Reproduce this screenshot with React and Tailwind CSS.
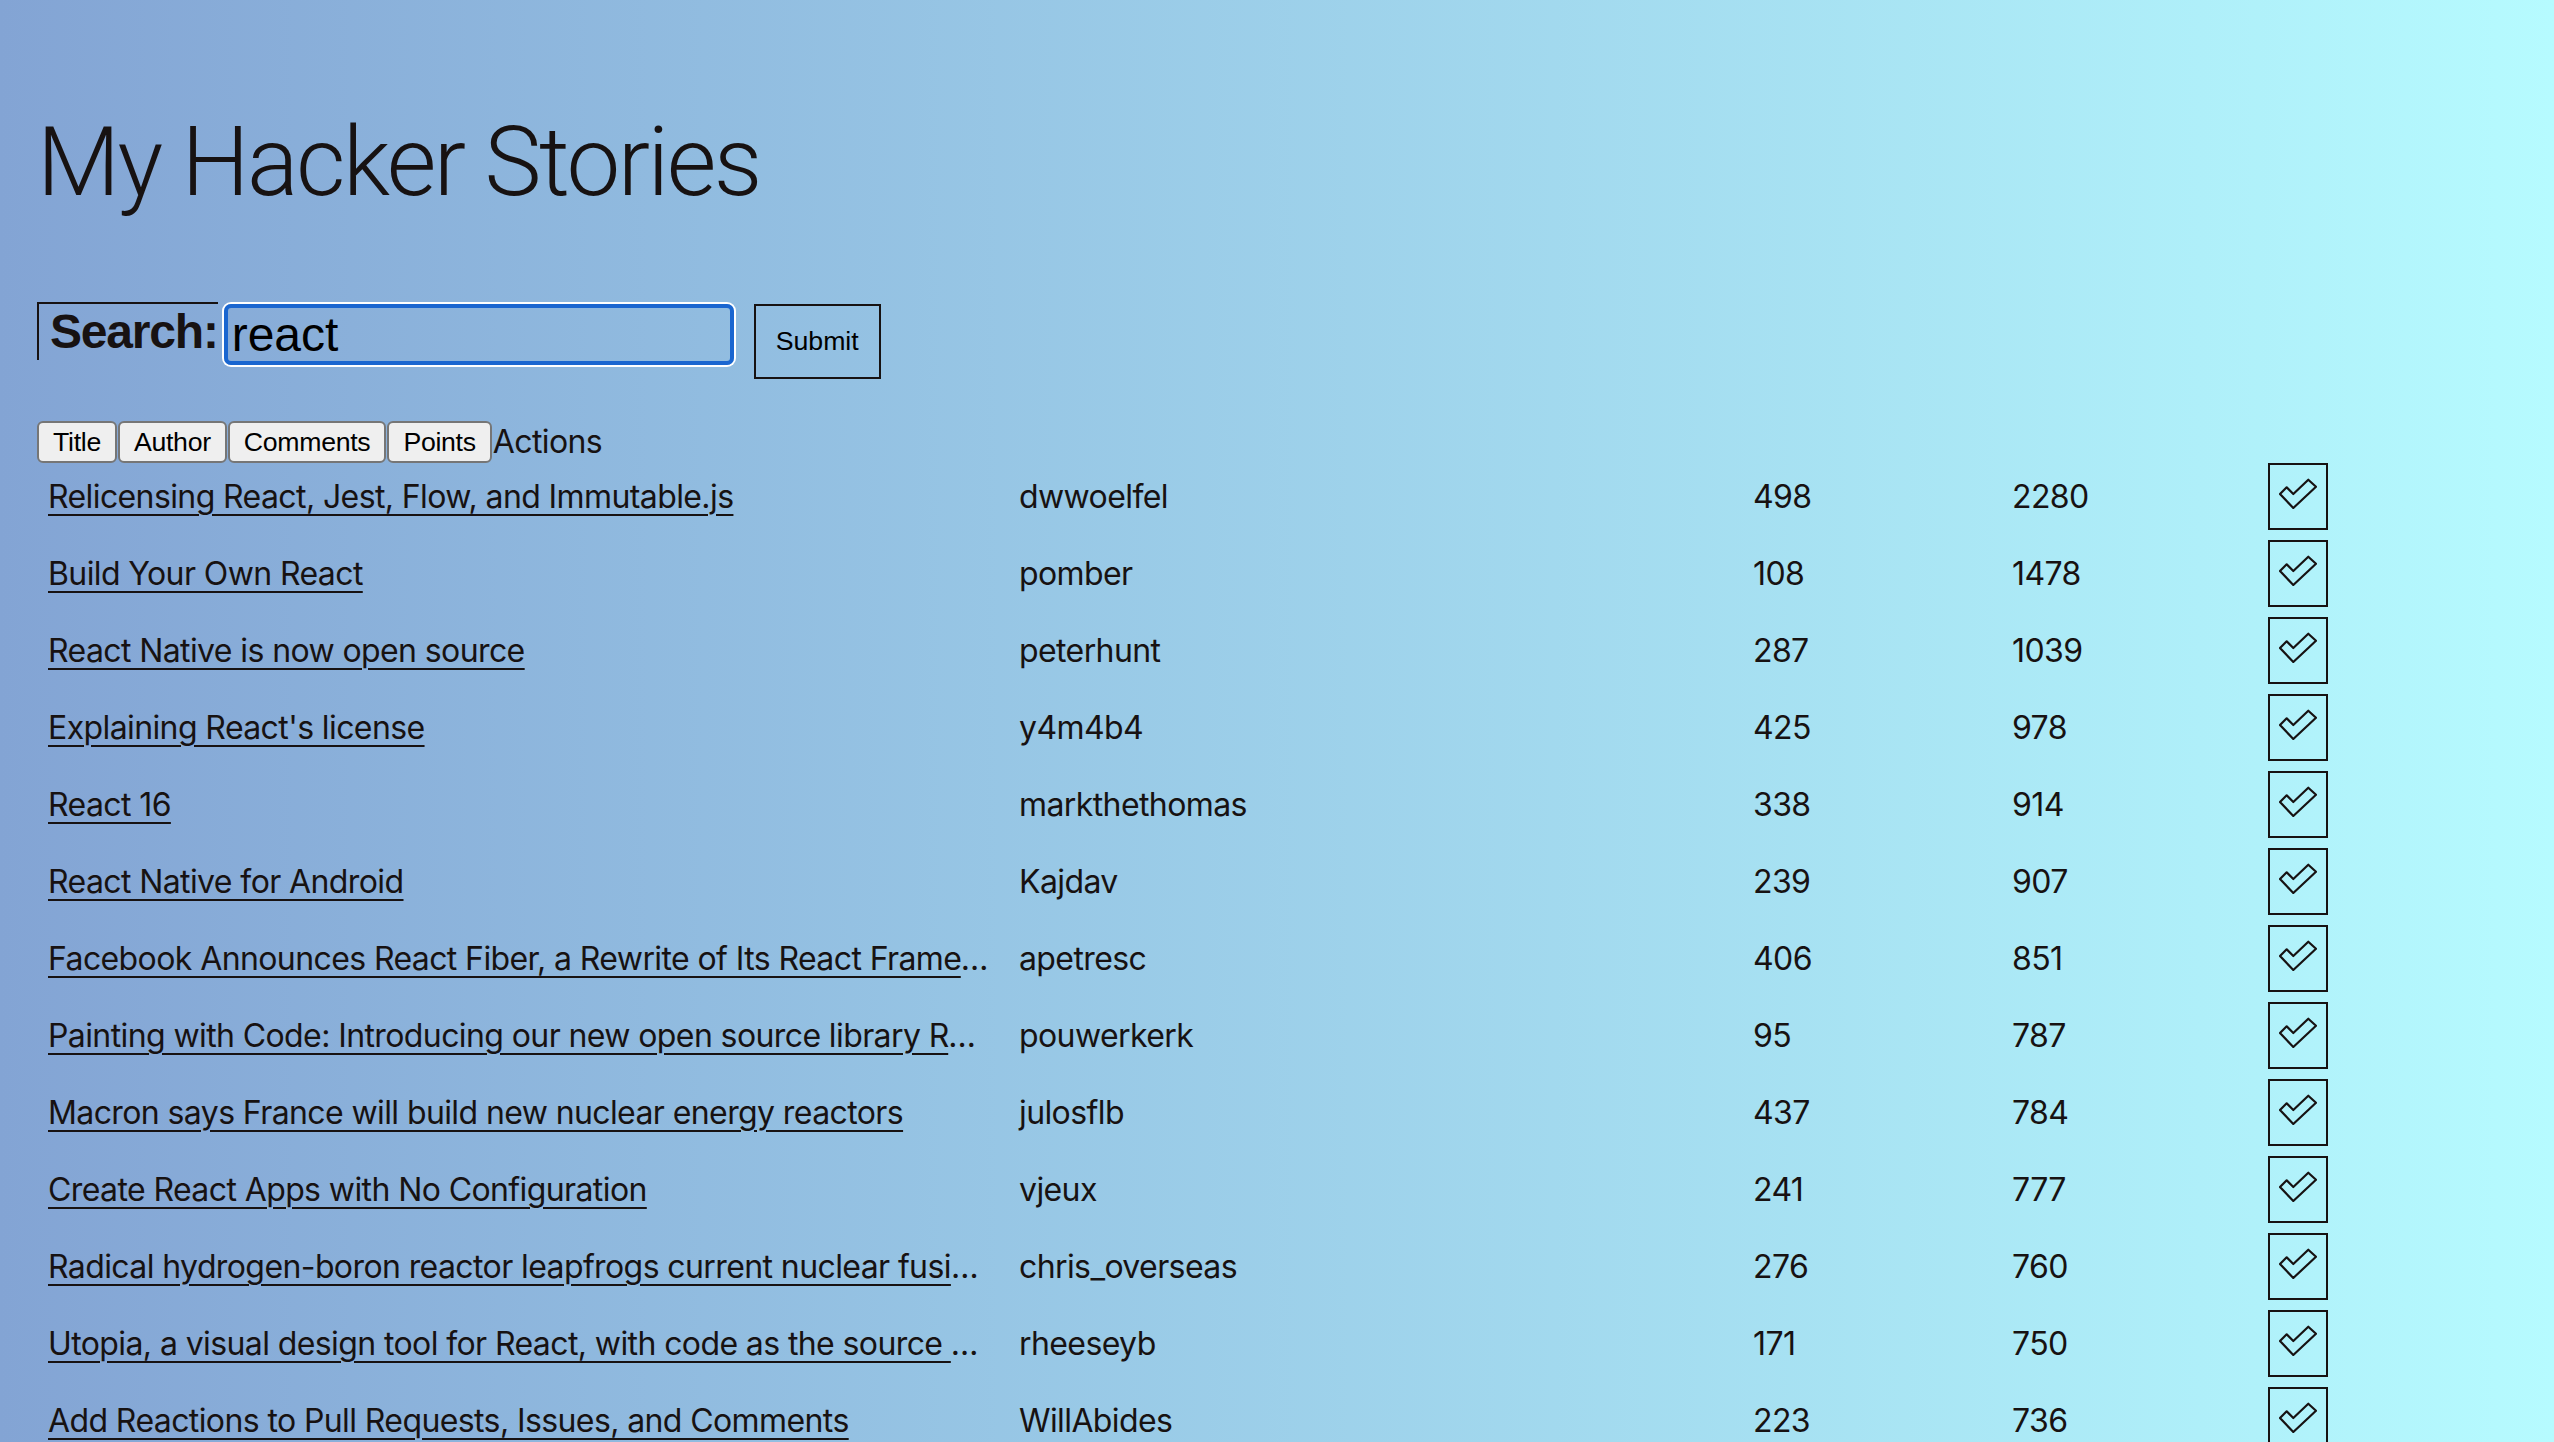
const stories = [
  { id: 1, title: "Relicensing React, Jest, Flow, and Immutable.js", author: "dwwoelfel", comments: 498, points: 2280 },
  { id: 2, title: "Build Your Own React", author: "pomber", comments: 108, points: 1478 },
  { id: 3, title: "React Native is now open source", author: "peterhunt", comments: 287, points: 1039 },
  { id: 4, title: "Explaining React's license", author: "y4m4b4", comments: 425, points: 978 },
  { id: 5, title: "React 16", author: "markthethomas", comments: 338, points: 914 },
  { id: 6, title: "React Native for Android", author: "Kajdav", comments: 239, points: 907 },
  { id: 7, title: "Facebook Announces React Fiber, a Rewrite of Its React Framework", author: "apetresc", comments: 406, points: 851 },
  { id: 8, title: "Painting with Code: Introducing our new open source library React Sketch.app", author: "pouwerkerk", comments: 95, points: 787 },
  { id: 9, title: "Macron says France will build new nuclear energy reactors", author: "julosflb", comments: 437, points: 784 },
  { id: 10, title: "Create React Apps with No Configuration", author: "vjeux", comments: 241, points: 777 },
  { id: 11, title: "Radical hydrogen-boron reactor leapfrogs current nuclear fusion tech", author: "chris_overseas", comments: 276, points: 760 },
  { id: 12, title: "Utopia, a visual design tool for React, with code as the source of truth", author: "rheeseyb", comments: 171, points: 750 },
  { id: 13, title: "Add Reactions to Pull Requests, Issues, and Comments", author: "WillAbides", comments: 223, points: 736 },
];

const Check = () => (
  <svg width="38" height="31" viewBox="-1 -1 38 31" className="mb-[7px]">
    <polygon
      points="0,15 6.7,8.3 13.3,15 28.3,0.7 36,7.7 13.3,29"
      fill="none"
      stroke="#171212"
      strokeWidth="2.2"
      strokeLinejoin="round"
    />
  </svg>
);

const SortButton = ({ children }) => (
  <button className="h-[42px] rounded-[6px] border-2 border-[#767676] bg-[#efefef] px-[14px] font-['Liberation_Sans',Arial,sans-serif] text-[26.7px] leading-none tracking-[-0.3px] text-black">
    {children}
  </button>
);

const Item = ({ item }) => (
  <div className="flex items-center pb-[10px] font-['Inter',sans-serif] text-[32px] tracking-[-0.6px]">
    <span className="w-[972px] shrink-0 overflow-hidden text-ellipsis whitespace-nowrap pl-[11px] pr-[15px]">
      <a href="#" className="underline decoration-[2px] underline-offset-[6px]">
        {item.title}
      </a>
    </span>
    <span className="w-[734px] shrink-0 px-[10px]">{item.author}</span>
    <span className="w-[259px] shrink-0 px-[10px]">{item.comments}</span>
    <span className="w-[256px] shrink-0 px-[10px]">{item.points}</span>
    <span className="px-[10px]">
      <button className="flex h-[67px] w-[60px] items-center justify-center border-2 border-[#171212] bg-transparent">
        <Check />
      </button>
    </span>
  </div>
);

export default function App() {
  return (
    <div className="h-screen overflow-hidden bg-[linear-gradient(to_right,#83a4d4,#b6fbff)] pl-[37px] pt-[40px] text-[#171212]">
      <h1 className="mb-[82px] mt-[64px] font-['Roboto',sans-serif] text-[96px] font-light leading-[116px] tracking-[-2.5px]">
        My Hacker Stories
      </h1>

      <form className="flex h-[76px] items-start">
        <label className="h-[58px] border-l-2 border-t-2 border-[#171212] pl-[11px] font-['Liberation_Sans',Arial,sans-serif] text-[48px] font-bold leading-[56px] tracking-[-1.2px]">
          Search:
        </label>
        <div className="ml-[6px] mt-[2px] h-[61px] w-[510px] rounded-[7px] border-4 border-[#1a66d0] shadow-[0_0_0_2px_white]">
          <input
            value="react"
            readOnly
            className="h-full w-full bg-transparent pl-[4px] font-['Liberation_Sans',Arial,sans-serif] text-[48px] text-black outline-none"
          />
        </div>
        <button
          type="button"
          className="ml-[20px] mt-[2px] h-[75px] w-[127px] border-2 border-[#171212] bg-transparent font-['Liberation_Sans',Arial,sans-serif] text-[26.7px] text-black"
        >
          Submit
        </button>
      </form>

      <div className="mt-[43px] flex h-[42px] items-center gap-[1px]">
        <SortButton>Title</SortButton>
        <SortButton>Author</SortButton>
        <SortButton>Comments</SortButton>
        <SortButton>Points</SortButton>
        <span className="font-['Inter',sans-serif] text-[32px] leading-none tracking-[-0.6px]">Actions</span>
      </div>

      {stories.map((item) => (
        <Item key={item.id} item={item} />
      ))}
    </div>
  );
}
